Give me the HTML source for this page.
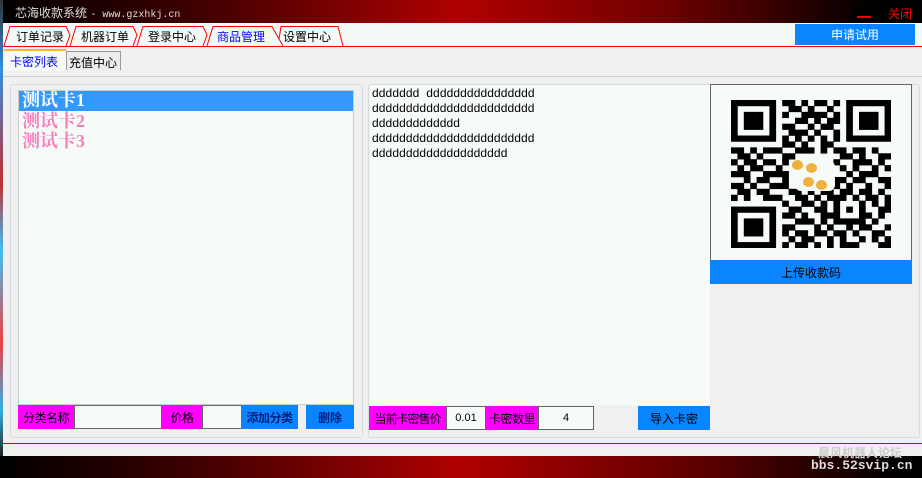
<!DOCTYPE html>
<html><head><meta charset="utf-8"><style>
*{margin:0;padding:0;box-sizing:border-box}
body{width:922px;height:478px;overflow:hidden;background:#f0f0f0;position:relative;font-family:"Liberation Sans","Noto Sans CJK SC",sans-serif;font-size:12px}
.a{position:absolute;white-space:nowrap}
.mag{background:#f0f;color:#000;display:flex;align-items:center;justify-content:center;font-size:12px;letter-spacing:-0.5px}
.inp{background:#f7fbf8;border:1px solid #666;display:flex;align-items:center;justify-content:center;font-size:11px}
.blu{background:#0a84ff;display:flex;align-items:center;justify-content:center;font-size:12px}
</style></head><body>
<div class="a" style="left:0;top:0;width:922px;height:23px;background:linear-gradient(90deg,#000 0%,#3a0000 20%,#b00000 50%,#700000 72%,#000 95%)"></div>
<div class="a" style="left:15px;top:4px;color:#ddd;font-size:12px">芯海收款系统 <span style="font-family:'Liberation Mono',monospace;font-size:10px">- www.gzxhkj.cn</span></div>
<div class="a" style="left:852px;top:7px;width:23px;height:15px;background:#000"></div>
<div class="a" style="left:857px;top:16px;width:14px;height:2px;background:#f00"></div>
<div class="a" style="left:888px;top:5px;color:#f00;font-size:12px">关闭</div>
<div class="a" style="left:0;top:23px;width:922px;height:23px;background:#f5faf7"></div>
<svg class="a" style="left:0;top:23px" width="922" height="26">
<g fill="none" stroke="#f00" stroke-width="1">
<line x1="3" y1="23.5" x2="922" y2="23.5"/>
<path d="M4 23 L10 3.5 H66 L70 12 L66 23"/>
<path d="M70 23 L76 3.5 H133 L137 12 L133 23"/>
<path d="M137 23 L143 3.5 H203 L207 12 L203 23"/>
<path d="M207 23 L213 3.5 H272 L279 16 L283 23"/>
<path d="M279 16 L281 3.5 H338 L343 23"/>
</g>
<g font-size="12" font-family="Liberation Sans,Noto Sans CJK SC,sans-serif">
<text x="16" y="18" fill="#000">订单记录</text>
<text x="81" y="18" fill="#000">机器订单</text>
<text x="148" y="18" fill="#000">登录中心</text>
<text x="217" y="18" fill="#00f">商品管理</text>
<text x="283" y="18" fill="#000">设置中心</text>
</g></svg>
<div class="a blu" style="left:795px;top:24px;width:120px;height:21px;color:#fff">申请试用</div>
<div class="a" style="left:4px;top:49px;width:62px;height:22px;background:#f5faf7;border-top:2px solid #f7b733;color:#00f;padding:2px 0 0 6px;font-size:12px">卡密列表</div>
<div class="a" style="left:66px;top:51px;width:55px;height:19px;background:#ececec;border:1px solid #999;border-bottom:none;padding:2px 0 0 2px;font-size:12px">充值中心</div>
<div class="a" style="left:3px;top:76px;width:919px;height:1px;background:#c8d4dc"></div>
<div class="a" style="left:10px;top:84px;width:353px;height:354px;border:1px solid #d6dde2;border-radius:3px"></div>
<div class="a" style="left:18px;top:90px;width:336px;height:315px;background:#f7fbf8;border:1px solid #ccc"></div>
<div class="a" style="left:19px;top:91px;width:334px;height:20px;background:#3399ff"></div>
<div class="a" style="left:22px;top:90px;font-family:'Liberation Serif','Noto Serif CJK SC',serif;font-weight:bold;font-size:18px;line-height:20px;color:#fff">测试卡1</div>
<div class="a" style="left:22px;top:111px;font-family:'Liberation Serif','Noto Serif CJK SC',serif;font-weight:bold;font-size:18px;line-height:20px;color:#f77fbf">测试卡2<br>测试卡3</div>
<div class="a mag" style="left:18px;top:405px;width:56px;height:24px">分类名称</div>
<div class="a inp" style="left:74px;top:405px;width:88px;height:24px"></div>
<div class="a mag" style="left:162px;top:405px;width:40px;height:24px">价格</div>
<div class="a inp" style="left:202px;top:405px;width:40px;height:24px"></div>
<div class="a blu" style="left:241px;top:405px;width:57px;height:24px;color:#002080;font-weight:bold;letter-spacing:-0.5px">添加分类</div>
<div class="a blu" style="left:306px;top:405px;width:48px;height:24px;color:#002080;font-weight:bold">删除</div>
<div class="a" style="left:368px;top:84px;width:552px;height:354px;border:1px solid #d6dde2;border-radius:3px"></div>
<div class="a" style="left:370px;top:85px;width:340px;height:320px;background:#f7fbf8"></div>
<div class="a" style="left:372px;top:86px;font-family:'Liberation Sans',sans-serif;font-size:12px;line-height:15px;letter-spacing:0.1px;color:#000;white-space:pre">ddddddd  dddddddddddddddd
dddddddddddddddddddddddd
ddddddddddddd
dddddddddddddddddddddddd
dddddddddddddddddddd</div>
<div class="a mag" style="left:369px;top:406px;width:77px;height:24px;letter-spacing:-1px">当前卡密售价</div>
<div class="a inp" style="left:446px;top:406px;width:40px;height:24px">0.01</div>
<div class="a mag" style="left:486px;top:406px;width:52px;height:24px">卡密数里</div>
<div class="a inp" style="left:538px;top:406px;width:56px;height:24px">4</div>
<div class="a blu" style="left:638px;top:406px;width:72px;height:24px;color:#000">导入卡密</div>
<div class="a" style="left:710px;top:84px;width:202px;height:177px;background:#f7fbf8;border:1px solid #666"></div>
<svg class="a" id="qr" style="left:731px;top:100px" width="160" height="148"></svg>
<div class="a" style="left:795px;top:161px;width:40px;height:30px;background:#f7fbf8;border-radius:6px"></div>
<div class="a" style="left:792px;top:160px;width:11px;height:10px;border-radius:50%;background:#f0b040"></div>
<div class="a" style="left:806px;top:163px;width:11px;height:10px;border-radius:50%;background:#f0b040"></div>
<div class="a" style="left:803px;top:177px;width:11px;height:10px;border-radius:50%;background:#f0b040"></div>
<div class="a" style="left:816px;top:180px;width:11px;height:10px;border-radius:50%;background:#f0b040"></div>
<div class="a blu" style="left:710px;top:260px;width:202px;height:24px;color:#000">上传收款码</div>
<div class="a" style="left:3px;top:443px;width:919px;height:1px;background:#d00"></div>
<div class="a" style="left:0;top:456px;width:922px;height:22px;background:linear-gradient(90deg,#000 0%,#3a0000 20%,#b00000 50%,#600000 75%,#000 97%)"></div>
<div class="a" style="left:818px;top:444px;color:#ccc;font-size:12px;font-weight:bold">晨风机器人论坛</div>
<div class="a" style="left:811px;top:458px;color:#ddd;font-family:'Liberation Mono',monospace;font-size:13px;font-weight:bold">bbs.52svip.cn</div>
<div class="a" style="left:0;top:0;width:3px;height:456px;background:linear-gradient(180deg,#333 0%,#3090e0 15%,#c03030 40%,#40c0f0 55%,#f04040 75%,#30b0e0 90%,#222 100%)"></div>
<script>
var r=["1111111011010110101111111","1000001001101001001000001","1011101010011110101011101","1011101000110101101011101","1011101011001011001011101","1000001001110100101000001","1111111010101010101111111","0000000011010011000000000","1101011100111010110110100","0110100011000000011010011","1011011010000000100111010","0101100100000000010100101","1110011110000000001011100","0010110010000000110110011","1101001110000000101001001","0110110001101011011011010","1010011100110101110101101","0000000010011010100010101","1111111001100110101010011","1000001011010011100011010","1011101000111010111110100","1011101011000101001011001","1011101010110110110100110","1000001001011001010010101","1111111010110101011100011"];
var s="",w=160/25,h=148/25;
for(var y=0;y<25;y++)for(var x=0;x<25;x++)if(r[y][x]=="1")s+='<rect x="'+(x*w)+'" y="'+(y*h)+'" width="'+(w+0.3)+'" height="'+(h+0.3)+'"/>';
document.getElementById("qr").innerHTML=s;
</script>
</body></html>
